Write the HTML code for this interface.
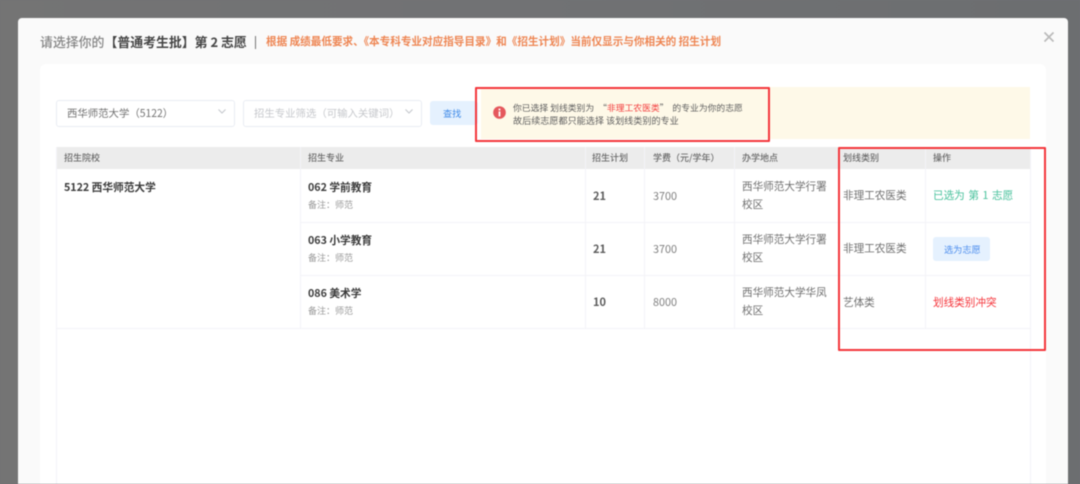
<!DOCTYPE html>
<html lang="zh">
<head>
<meta charset="utf-8">
<title>请选择你的志愿</title>
<style>
html,body{margin:0;padding:0;width:1080px;height:484px;overflow:hidden;background:#737476}
body{font-family:"Noto Sans CJK SC","Liberation Sans",sans-serif;position:relative}
#wrap{position:absolute;left:0;top:0;width:1080px;height:484px;overflow:hidden;filter:blur(.55px);background:linear-gradient(90deg,#747474 0,#717274 50%,#6c6e70 100%)}
#wrap div{position:absolute}
.t{position:absolute;white-space:nowrap;line-height:16px}
.modal{left:18px;top:18px;width:1050px;height:480px;background:#fafafa;border-radius:4px}
.panel{left:40px;top:64px;width:1006px;height:440px;background:#fff;border-radius:6px}
.sel{background:#fff;border:1px solid #e9ecf3;border-radius:3px;box-sizing:border-box;height:27px;top:99.5px}
.hl{background:#f3f3f8;height:1px}
.vl{background:#f3f3f8;width:1px}
.th{font-size:9px;color:#6a6a6a;top:150px;font-weight:500}
.head{background:#ececec;left:56px;top:147px;width:974px;height:22px}
.name{font-size:10.7px;font-weight:bold;color:#3a3a3a}
.note{font-size:9px;color:#9a9a9a}
.num{font-size:11px;font-weight:bold;color:#5a5a5a}
.fee{font-size:10.8px;color:#808080}
.c{font-size:10.6px;color:#707070}
.red{border:2.2px solid #f4363b;box-sizing:border-box;border-radius:1px}
</style>
</head>
<body>
<div id="wrap">
  <div class="modal"></div>
  <div class="panel"></div>

  <span class="t" style="left:40px;top:34px;font-size:12.9px;color:#858585;font-weight:500">请选择你的<b style="color:#444;font-weight:bold">【普通考生批】第 2 志愿</b></span>
  <div style="left:255px;top:36px;width:1.4px;height:13px;background:#777"></div>
  <span class="t" style="left:266px;top:34px;font-size:10.6px;color:#ee8552;font-weight:bold">根据 成绩最低要求、《本专科专业对应指导目录》和《招生计划》当前仅显示与你相关的 招生计划</span>

  <svg style="position:absolute;left:1043px;top:31px" width="12" height="12" viewBox="0 0 12 12"><path d="M1.5 1.5 10.5 10.5M10.5 1.5 1.5 10.5" stroke="#b9b9b9" stroke-width="1.6" fill="none"/></svg>

  <div class="sel" style="left:55.5px;width:179px"></div>
  <span class="t" style="left:67px;top:105px;font-size:10.4px;color:#707070">西华师范大学（5122）</span>
  <svg style="position:absolute;left:217px;top:108px" width="10" height="7" viewBox="0 0 10 7"><path d="M1.5 1.5 5 5 8.5 1.5" stroke="#c3c6cc" stroke-width="1" fill="none"/></svg>
  <div class="sel" style="left:242.5px;width:179.5px"></div>
  <span class="t" style="left:254px;top:105px;font-size:10.4px;color:#c6c8cc">招生专业筛选（可输入关键词）</span>
  <svg style="position:absolute;left:404px;top:108px" width="10" height="7" viewBox="0 0 10 7"><path d="M1.5 1.5 5 5 8.5 1.5" stroke="#c3c6cc" stroke-width="1" fill="none"/></svg>
  <div style="left:430px;top:101px;width:48px;height:24px;background:#e5f1fe;border-radius:3px"></div>
  <span class="t" style="left:443px;top:105px;font-size:9.2px;color:#3f8ae8">查找</span>

  <div style="left:481px;top:87px;width:549px;height:52px;background:#fef9e8"></div>
  <svg style="position:absolute;left:493px;top:106px" width="13" height="13" viewBox="0 0 13 13"><circle cx="6.5" cy="6.5" r="6.3" fill="#e5585c"/><rect x="5.6" y="2.6" width="1.8" height="1.8" fill="#fff"/><rect x="5.6" y="5.4" width="1.8" height="5" fill="#fff"/></svg>
  <span class="t" style="left:513px;top:99.5px;font-size:8.8px;color:#5f5f5f">你已选择 划线类别为 &nbsp;“<span style="color:#f33d3d">非理工农医类</span>” &nbsp;的专业为你的志愿</span>
  <span class="t" style="left:513px;top:112px;font-size:9.1px;color:#5f5f5f">故后续志愿都只能选择 该划线类别的专业</span>

  <div class="head"></div>
  <div class="vl" style="left:55.5px;top:147px;height:337px"></div>
  <div class="vl" style="left:1030px;top:147px;height:337px"></div>
  <div class="vl" style="left:300px;top:147px;height:182px"></div>
  <div class="vl" style="left:585px;top:147px;height:182px"></div>
  <div class="vl" style="left:644px;top:147px;height:182px"></div>
  <div class="vl" style="left:734px;top:147px;height:182px"></div>
  <div class="vl" style="left:838px;top:147px;height:182px"></div>
  <div class="vl" style="left:925px;top:147px;height:182px"></div>
  <div class="hl" style="left:300px;top:222px;width:730px"></div>
  <div class="hl" style="left:300px;top:275px;width:730px"></div>
  <div class="hl" style="left:56px;top:328px;width:974px"></div>

  <span class="t th" style="left:64px">招生院校</span>
  <span class="t th" style="left:308px">招生专业</span>
  <span class="t th" style="left:592px">招生计划</span>
  <span class="t th" style="left:653px">学费（元/学年）</span>
  <span class="t th" style="left:742px">办学地点</span>
  <span class="t th" style="left:843px">划线类别</span>
  <span class="t th" style="left:933px">操作</span>

  <span class="t name" style="left:64px;top:180px">5122 西华师范大学</span>

  <span class="t name" style="left:308px;top:180px">062 学前教育</span>
  <span class="t note" style="left:308px;top:197px">备注：师范</span>
  <span class="t name" style="left:308px;top:233px">063 小学教育</span>
  <span class="t note" style="left:308px;top:250px">备注：师范</span>
  <span class="t name" style="left:308px;top:286px">086 美术学</span>
  <span class="t note" style="left:308px;top:303px">备注：师范</span>

  <span class="t num" style="left:593px;top:188px">21</span>
  <span class="t num" style="left:593px;top:241px">21</span>
  <span class="t num" style="left:593px;top:294px">10</span>
  <span class="t fee" style="left:653px;top:188px">3700</span>
  <span class="t fee" style="left:653px;top:241px">3700</span>
  <span class="t fee" style="left:653px;top:294px">8000</span>

  <span class="t c" style="left:742px;top:179px">西华师范大学行署</span>
  <span class="t c" style="left:742px;top:197px">校区</span>
  <span class="t c" style="left:742px;top:232px">西华师范大学行署</span>
  <span class="t c" style="left:742px;top:250px">校区</span>
  <span class="t c" style="left:742px;top:285px">西华师范大学华凤</span>
  <span class="t c" style="left:742px;top:303px">校区</span>

  <span class="t c" style="left:843px;top:188px">非理工农医类</span>
  <span class="t c" style="left:843px;top:241px">非理工农医类</span>
  <span class="t c" style="left:843px;top:295px">艺体类</span>

  <span class="t" style="left:933px;top:188px;font-size:10.6px;color:#45c09a;word-spacing:1.2px">已选为 第 1 志愿</span>
  <div style="left:933px;top:237px;width:57px;height:24px;background:#e5f1fe;border-radius:3px"></div>
  <span class="t" style="left:944px;top:241px;font-size:9.2px;color:#4f8fee">选为志愿</span>
  <span class="t" style="left:933px;top:295px;font-size:10.6px;color:#f5343a">划线类别冲突</span>

  <div class="red" style="left:475px;top:86.5px;width:295px;height:55.5px"></div>
  <div class="red" style="left:838px;top:146.5px;width:208px;height:204px"></div>
</div>
</body>
</html>
